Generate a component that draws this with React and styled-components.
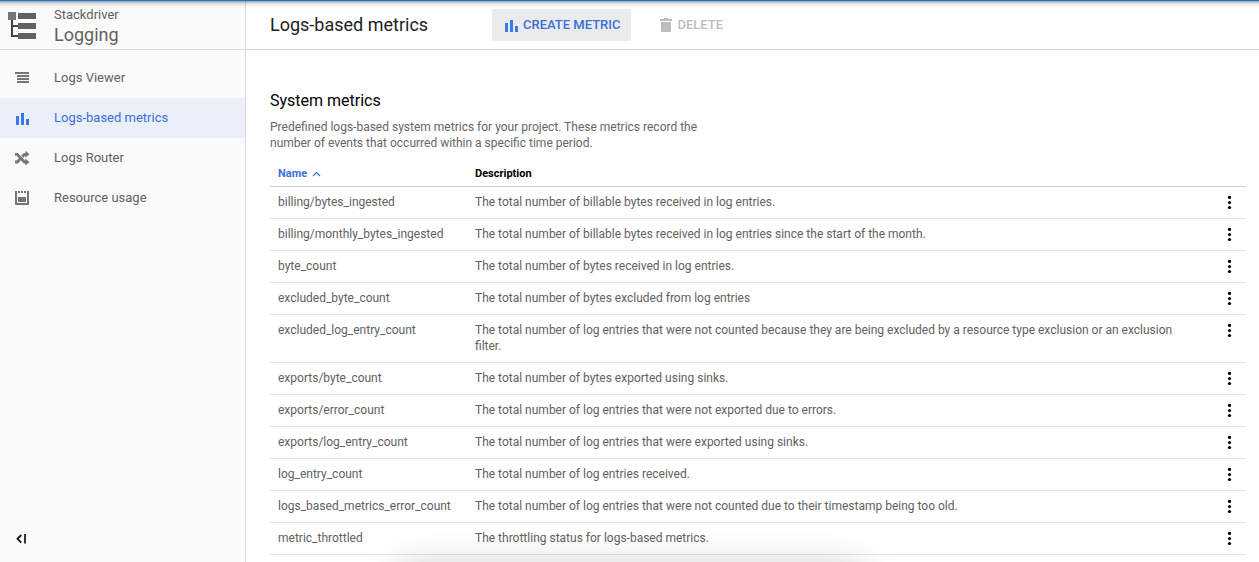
import React from 'react';
import styled, { createGlobalStyle } from 'styled-components';

const GlobalStyle = createGlobalStyle`
  *, *::before, *::after { box-sizing: border-box; }
  body {
    margin: 0;
    background: #fff;
    font-family: Roboto, "Liberation Sans", sans-serif;
    overflow: hidden;
  }
  svg { display: block; flex: none; }
`;

const Page = styled.div`
  position: relative;
  display: flex;
  height: 562px;
  overflow: hidden;
`;

const TopBar = styled.div`
  position: absolute;
  inset: 0 0 auto 0;
  height: 8px;
  border-top: 1px solid #1976d8;
  background: linear-gradient(rgba(0, 0, 0, 0.36), rgba(0, 0, 0, 0.13) 35%, rgba(0, 0, 0, 0.04) 65%, transparent);
  z-index: 2;
`;

const BottomShadow = styled.div`
  position: absolute;
  left: 400px;
  top: 568px;
  width: 460px;
  height: 40px;
  box-shadow: 0 0 36px 2px rgba(0, 0, 0, 0.2);
  z-index: 2;
`;

const Sidebar = styled.aside`
  flex: none;
  width: 246px;
  display: flex;
  flex-direction: column;
  background: #fafafa;
  border-right: 1px solid #d9d9d9;
`;

const Brand = styled.div`
  height: 50px;
  padding: 6px 0 0 8px;
  display: flex;
  gap: 18px;
  border-bottom: 1px solid #d9d9d9;
`;

const BrandIcon = styled.svg`
  margin-top: 6px;
`;

const Suite = styled.div`
  font-size: 13px;
  line-height: 18px;
  color: #616161;
`;

const Product = styled.div`
  font-size: 18px;
  line-height: 22px;
  color: #616161;
`;

const Nav = styled.nav`
  flex: 1;
  padding-top: 8px;
`;

const NavItem = styled.div`
  height: 40px;
  padding-left: 14px;
  display: flex;
  align-items: center;
  gap: 24px;
  font-size: 13px;
  color: ${(p) => (p.$active ? '#3a6fd9' : '#616161')};
  background: ${(p) => (p.$active ? '#eaeff9' : 'transparent')};
`;

const NavLabel = styled.span`
  padding-bottom: 2px;
`;

const Collapse = styled.div`
  padding: 0 0 18px 16px;
`;

const Main = styled.main`
  flex: 1;
  min-width: 0;
`;

const Toolbar = styled.header`
  height: 50px;
  padding-left: 24px;
  display: flex;
  align-items: center;
  border-bottom: 1px solid #d4d4d4;
`;

const Title = styled.h1`
  margin: 0;
  width: 222px;
  font-size: 18px;
  font-weight: 400;
  color: #212121;
`;

const Button = styled.button`
  height: 32px;
  margin-right: 17px;
  padding: 0 11px 1px 12px;
  display: flex;
  align-items: center;
  gap: 5px;
  border: 0;
  border-radius: 2px;
  font: 500 13px Roboto, sans-serif;
  white-space: nowrap;
  color: ${(p) => (p.disabled ? '#bdbdbd' : '#3a6fd9')};
  background: ${(p) => (p.disabled ? 'transparent' : '#ebebeb')};
`;

const Content = styled.section`
  padding: 40px 13px 0 24px;
`;

const SectionTitle = styled.h2`
  margin: 0;
  font-size: 16px;
  line-height: 22px;
  font-weight: 400;
  color: #000;
`;

const Intro = styled.p`
  margin: 7px 0 9px;
  width: 440px;
  font-size: 12px;
  line-height: 16px;
  color: #666;
`;

const Row = styled.div`
  display: grid;
  grid-template-columns: 205px 704px 1fr;
  padding: 7px 0 8px;
  border-bottom: 1px solid #e5e5e5;
  font-size: 12px;
  line-height: 16px;
  color: #616161;
`;

const HeadRow = styled(Row)`
  padding: 6px 0 4px;
  font-size: 11px;
  font-weight: 700;
  border-color: #d0d0d0;
  color: #000;
`;

const NameCell = styled.div`
  padding-left: 8px;
  white-space: nowrap;
`;

const SortCell = styled(NameCell)`
  display: flex;
  align-items: center;
  gap: 5px;
  color: #3a70de;
`;

const MenuCell = styled.div`
  display: flex;
  justify-content: flex-end;
  padding: 2px 14px 0 0;
`;

const Bars = () => (
  <svg width="14" height="15" viewBox="0 0 14 15" fill="#3b78e7" shapeRendering="crispEdges">
    <path d="M1 6h3v9H1zM6 3h3v12H6zM11 9h3v6h-3z" />
  </svg>
);

const Lines = () => (
  <svg width="16" height="16" viewBox="0 0 16 16" fill="#757575" shapeRendering="crispEdges">
    <path d="M1 2h14v2H1zM3 5h12v2H3zM3 8h12v2H3zM3 11h12v2H3z" />
  </svg>
);

const NavBars = () => (
  <svg width="16" height="16" viewBox="0 0 16 16" fill="#3b78e7" shapeRendering="crispEdges">
    <path d="M2 6h3v9H2zM7 3h3v12H7zM12 9h3v6h-3z" />
  </svg>
);

const Shuffle = () => (
  <svg width="16" height="16" viewBox="0 0 16 16">
    <path d="M1 4.300h2.200L10.500 12H12.500M1 12h2.200L5.800 9.300M8.300 6.700L10.500 4.300H12.500" fill="none" stroke="#757575" strokeWidth="2.800" />
    <path d="M11.400 0.800L15.400 4.300l-4 3.500zM11.400 8.500l4 3.500-4 3.500z" fill="#757575" />
  </svg>
);

const Resource = () => (
  <svg width="16" height="16" viewBox="0 0 16 16" fill="#757575">
    <path d="M1 1h2v12h10V1h2v13a1 1 0 0 1-1 1H2a1 1 0 0 1-1-1zM4 1h2v2H4zM7 1h2v2H7zM10 1h2v2h-2zM4 7h8v5H4z" />
  </svg>
);

const Trash = () => (
  <svg width="12" height="15" viewBox="0 0 12 15" fill="#bdbdbd">
    <path d="M0 2h3.500l1-1h3l1 1H12v2H0zM1 5h10v8.500A1.500 1.500 0 0 1 9.500 15h-7A1.500 1.500 0 0 1 1 13.500z" />
  </svg>
);

const Kebab = () => (
  <svg width="5" height="13" viewBox="0 0 5 13" fill="#000">
    <circle cx="2.500" cy="1.500" r="1.600" />
    <circle cx="2.500" cy="6.500" r="1.600" />
    <circle cx="2.500" cy="11.500" r="1.600" />
  </svg>
);

const navItems = [
  { label: 'Logs Viewer', Icon: Lines },
  { label: 'Logs-based metrics', Icon: NavBars, active: true },
  { label: 'Logs Router', Icon: Shuffle },
  { label: 'Resource usage', Icon: Resource },
];

const metrics = [
  ['billing/bytes_ingested', 'The total number of billable bytes received in log entries.'],
  ['billing/monthly_bytes_ingested', 'The total number of billable bytes received in log entries since the start of the month.'],
  ['byte_count', 'The total number of bytes received in log entries.'],
  ['excluded_byte_count', 'The total number of bytes excluded from log entries'],
  ['excluded_log_entry_count', 'The total number of log entries that were not counted because they are being excluded by a resource type exclusion or an exclusion filter.'],
  ['exports/byte_count', 'The total number of bytes exported using sinks.'],
  ['exports/error_count', 'The total number of log entries that were not exported due to errors.'],
  ['exports/log_entry_count', 'The total number of log entries that were exported using sinks.'],
  ['log_entry_count', 'The total number of log entries received.'],
  ['logs_based_metrics_error_count', 'The total number of log entries that were not counted due to their timestamp being too old.'],
  ['metric_throttled', 'The throttling status for logs-based metrics.'],
];

export default function App() {
  return (
    <Page>
      <GlobalStyle />
      <TopBar />
      <Sidebar>
        <Brand>
          <BrandIcon width="28" height="28" viewBox="0 0 28 28" shapeRendering="crispEdges">
            <path d="M3 8h2v5h5v2H5v8h5v2H3z" fill="#424242" />
            <path d="M0 0h8v8H0z" fill="#757575" />
            <path d="M10 1h18v6H10zM10 11h18v6H10zM10 21h18v6H10z" fill="#616161" />
          </BrandIcon>
          <div>
            <Suite>Stackdriver</Suite>
            <Product>Logging</Product>
          </div>
        </Brand>
        <Nav>
          {navItems.map(({ label, Icon, active }) => (
            <NavItem key={label} $active={active}>
              <Icon />
              <NavLabel>{label}</NavLabel>
            </NavItem>
          ))}
        </Nav>
        <Collapse>
          <svg width="11" height="10" viewBox="0 0 11 10" fill="none" stroke="#111">
            <path d="M5.300 1L1.500 4.800 5.300 8.600" strokeWidth="1.800" />
            <path d="M9 0v9.500" strokeWidth="2" stroke="#333" />
          </svg>
        </Collapse>
      </Sidebar>
      <Main>
        <Toolbar>
          <Title>Logs-based metrics</Title>
          <Button>
            <Bars />
            CREATE METRIC
          </Button>
          <Button disabled>
            <Trash />
            DELETE
          </Button>
        </Toolbar>
        <Content>
          <SectionTitle>System metrics</SectionTitle>
          <Intro>
            Predefined logs-based system metrics for your project. These metrics record the
            number of events that occurred within a specific time period.
          </Intro>
          <HeadRow>
            <SortCell>
              Name
              <svg width="9" height="6" viewBox="0 0 9 6" fill="none" stroke="#3a70de" strokeWidth="1.200">
                <path d="M1 5l3.500-3.500L8 5" />
              </svg>
            </SortCell>
            <div>Description</div>
          </HeadRow>
          {metrics.map(([name, description]) => (
            <Row key={name}>
              <NameCell>{name}</NameCell>
              <div>{description}</div>
              <MenuCell>
                <Kebab />
              </MenuCell>
            </Row>
          ))}
        </Content>
      </Main>
      <BottomShadow />
    </Page>
  );
}
